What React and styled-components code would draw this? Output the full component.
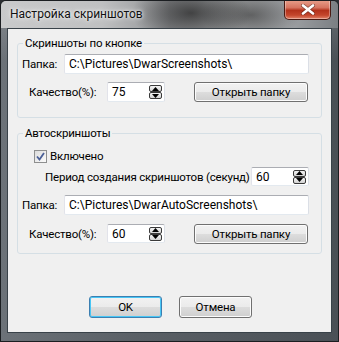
import React from "react";
import styled, { createGlobalStyle, css } from "styled-components";

const GlobalStyle = createGlobalStyle`
  html, body { margin: 0; padding: 0; background: #2b2e32; }
  body { font-family: Roboto, "Noto Sans", sans-serif; font-size: 12px; color: #000; }
  * { box-sizing: border-box; }
`;

const uiText = css`
  font-size: 11.5px;
  letter-spacing: -0.2px;
`;

const Window = styled.div`
  width: 339px;
  height: 342px;
  display: flex;
  flex-direction: column;
  border: 1px solid #1b1e21;
  border-radius: 6px 6px 0 0;
  background:
    linear-gradient(180deg, rgba(255,255,255,0.18) 0px, rgba(255,255,255,0) 60px),
    linear-gradient(90deg, #6c7278 0%, #5a6066 40%, #4a5056 100%);
  overflow: hidden;
`;

const TitleBar = styled.div`
  height: 27px;
  display: flex;
  justify-content: space-between;
  align-items: flex-start;
  padding-left: 9px;
  background:
    radial-gradient(ellipse 60px 30px at 190px 12px, rgba(30,30,30,0.7), rgba(30,30,30,0) 100%),
    radial-gradient(ellipse 50px 25px at 250px 14px, rgba(40,40,40,0.55), rgba(40,40,40,0) 100%),
    linear-gradient(90deg, #c9cacb 0%, #bfc0c1 30%, #8f9194 50%, #a6a8aa 70%, #9fa2a5 85%, #7b7f83 100%);
`;

const Title = styled.div`
  margin-top: 6px;
  font-size: 12px;
  color: #111;
  text-shadow: 0 0 6px rgba(255,255,255,0.95), 0 0 3px rgba(255,255,255,0.9);
`;

const CloseButton = styled.div`
  width: 47px;
  height: 20px;
  margin-right: 7px;
  margin-top: -1px;
  display: flex;
  align-items: center;
  justify-content: center;
  border: 1px solid #4a1a12;
  border-top: none;
  border-radius: 0 0 5px 5px;
  background: linear-gradient(180deg, #e9a08c 0%, #d67460 40%, #b3321b 55%, #c4462c 80%, #e2846a 100%);
  box-shadow: inset 0 0 0 1px rgba(255,255,255,0.35);
`;

const Client = styled.div`
  flex: 1;
  margin: 0 6px 8px 6px;
  border: 1px solid #394249;
  background: #f0f0f0;
  padding: 6px 9px 0 9px;
  display: flex;
  flex-direction: column;
`;

const Group = styled.fieldset`
  margin: 0;
  padding: 0 12px 0 0;
  border: 1px solid #d5dfe5;
  border-radius: 3px;
  min-width: 0;
  & + & { margin-top: 7px; }
`;

const Legend = styled.legend`
  ${uiText};
  margin-left: 5px;
  padding: 0 2px;
  line-height: 16px;
`;

const Row = styled.div`
  display: flex;
  align-items: center;
  min-width: 0;
  height: ${(p) => p.$h || 20}px;
  margin-top: ${(p) => p.$mt || 0}px;
  padding-left: ${(p) => p.$pl || 0}px;
  margin-bottom: ${(p) => p.$mb || 0}px;
`;

const Label = styled.span`
  ${uiText};
  width: ${(p) => (p.$w ? `${p.$w}px` : "auto")};
  flex: none;
  white-space: nowrap;
`;

const textBox = css`
  height: 100%;
  background: #fff;
  border: 1px solid;
  border-color: #abadb3 #dbdfe6 #e3e9ef #e2e3ea;
  border-radius: 2px;
  padding: 0 4px;
  display: flex;
  align-items: center;
  white-space: nowrap;
  overflow: hidden;
`;

const TextInput = styled.div`
  ${textBox};
  flex: 1;
  min-width: 0;
`;

const SpinBox = styled.div`
  ${textBox};
  width: ${(p) => p.$w || 58}px;
  height: ${(p) => p.$h || 20}px;
  flex: none;
  justify-content: space-between;
  padding-right: 2px;
  margin-left: ${(p) => (p.$auto ? "auto" : "0")};
`;

const SpinButtons = styled.div`
  display: flex;
  flex-direction: column;
`;

const SpinBtn = styled.div`
  width: 13px;
  height: 7px;
  border: 1px solid #3a3a3a;
  border-radius: 2px;
  background: linear-gradient(180deg, #f4f4f4, #d2d2d2);
  display: flex;
  align-items: center;
  justify-content: center;
`;

const Button = styled.div`
  ${uiText};
  width: ${(p) => p.$w || 114}px;
  height: ${(p) => p.$h || 20}px;
  flex: none;
  margin-left: ${(p) => (p.$auto ? "auto" : "0")};
  margin-right: ${(p) => p.$mr || 0}px;
  display: flex;
  align-items: center;
  justify-content: center;
  border: 1px solid ${(p) => (p.$default ? "#3c7fb1" : "#707070")};
  border-radius: 3px;
  background: linear-gradient(180deg, #f2f2f2 0%, #ebebeb 50%, #dddddd 50%, #cfcfcf 100%);
  box-shadow: inset 0 0 0 1px ${(p) => (p.$default ? "#48c6f5" : "#fcfcfc")};
  white-space: nowrap;
`;

const CheckBox = styled.div`
  width: 13px;
  height: 13px;
  border: 1px solid #8e8f8f;
  background: linear-gradient(135deg, #dcdcdc, #fbfbfb);
  display: flex;
  align-items: center;
  justify-content: center;
  margin-right: 3px;
`;

const Footer = styled.div`
  display: flex;
  justify-content: center;
  gap: 17px;
  margin-top: 42px;
  padding-left: 2px;
`;

const Arrow = ({ down }) => (
  <svg width="7" height="4" viewBox="0 0 7 4">
    <path d={down ? "M0 0 H7 L3.5 4 Z" : "M0 4 H7 L3.5 0 Z"} fill="#000" />
  </svg>
);

const Spin = ({ value, ...rest }) => (
  <SpinBox {...rest}>
    <span>{value}</span>
    <SpinButtons>
      <SpinBtn><Arrow /></SpinBtn>
      <SpinBtn><Arrow down /></SpinBtn>
    </SpinButtons>
  </SpinBox>
);

export default function App() {
  return (
    <>
      <GlobalStyle />
      <Window>
        <TitleBar>
          <Title>Настройка скриншотов</Title>
          <CloseButton>
            <svg width="14" height="11" viewBox="0 0 14 11">
              <path d="M2 1.5 L12 9.5 M12 1.5 L2 9.5" stroke="#3a1a12" strokeWidth="4" strokeLinecap="round" opacity="0.5" />
              <path d="M2 1.5 L12 9.5 M12 1.5 L2 9.5" stroke="#fff" strokeWidth="2.6" strokeLinecap="round" />
            </svg>
          </CloseButton>
        </TitleBar>
        <Client>
          <Group>
            <Legend>Скриншоты по кнопке</Legend>
            <Row $mt={3} $pl={4}>
              <Label $w={42}>Папка:</Label>
              <TextInput>C:\Pictures\DwarScreenshots\</TextInput>
            </Row>
            <Row $mt={8} $pl={11} $mb={15}>
              <Label $w={78}>Качество(%):</Label>
              <Spin value="75" />
              <Button $auto $mr={1}>Открыть папку</Button>
            </Row>
          </Group>
          <Group>
            <Legend>Автоскриншоты</Legend>
            <Row $mt={8} $h={14} $pl={16}>
              <CheckBox>
                <svg width="9" height="9" viewBox="0 0 9 9">
                  <path d="M1 4.5 L3.5 7.5 L8 1" stroke="#4a5f97" strokeWidth="1.8" fill="none" />
                </svg>
              </CheckBox>
              <Label>Включено</Label>
            </Row>
            <Row $mt={4} $h={19} $pl={27}>
              <Label>Период создания скриншотов (секунд)</Label>
              <Spin value="60" $w={58} $h={19} $auto />
            </Row>
            <Row $mt={9} $pl={4}>
              <Label $w={42}>Папка:</Label>
              <TextInput>C:\Pictures\DwarAutoScreenshots\</TextInput>
            </Row>
            <Row $mt={8} $h={21} $pl={11} $mb={9}>
              <Label $w={78}>Качество(%):</Label>
              <Spin value="60" $h={19} />
              <Button $auto $mr={1}>Открыть папку</Button>
            </Row>
          </Group>
          <Footer>
            <Button $w={73} $h={22} $default>OK</Button>
            <Button $w={73} $h={22}>Отмена</Button>
          </Footer>
        </Client>
      </Window>
    </>
  );
}
